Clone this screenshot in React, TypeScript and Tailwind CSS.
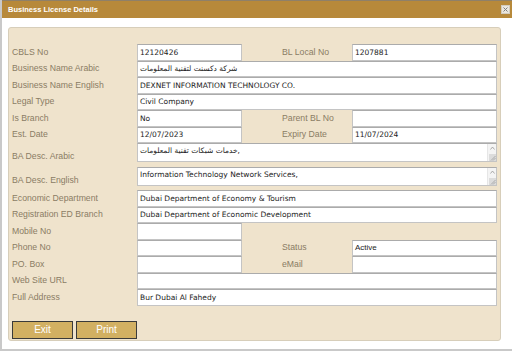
import React from "react"

const labelCls = "font-['Liberation_Sans',Arial,sans-serif] text-[8.7px] text-[#8a7c64] whitespace-nowrap"
const boxCls =
  "h-full border border-[#c4c4c4] border-t-[#ababab] bg-white flex items-center pl-[2px] font-['DejaVu_Sans',sans-serif] text-[7.5px] text-[#1c1c1c] whitespace-nowrap overflow-hidden"

function Field({ value = "", className = "" }: { value?: string; className?: string }) {
  return <div className={`${boxCls} ${className}`}>{value}</div>
}

function Row({ children }: { children: React.ReactNode }) {
  return <div className="grid grid-cols-[128px_105px_110px_145px] h-[16.5px]">{children}</div>
}

function Label({ text, right = false }: { text: string; right?: boolean }) {
  return (
    <div className={`flex items-center ${right ? "pl-[40px]" : "pl-[3px]"} ${labelCls}`}>{text}</div>
  )
}

function TextAreaRow({ label, value }: { label: string; value: string }) {
  return (
    <div className="grid grid-cols-[128px_360px] h-[23.5px]">
      <div className={`flex items-end pb-[3px] pl-[3px] ${labelCls}`}>{label}</div>
      <div className="h-[19px] flex border border-[#c4c4c4] border-t-[#ababab] bg-white">
        <div className="flex-1 pl-[2px] pt-[1px] font-['DejaVu_Sans',sans-serif] text-[7.5px] text-[#1c1c1c] whitespace-nowrap overflow-hidden">
          {value}
        </div>
        <div className="w-[9px] flex flex-col items-center justify-between bg-[#f4f4f4] border-l border-[#e6e6e6]">
          <svg width="5" height="4" viewBox="0 0 5 4" className="mt-[2px]">
            <path d="M0.5 3.5 L2.5 1 L4.5 3.5" fill="none" stroke="#9a9a9a" strokeWidth="0.8" />
          </svg>
          <svg width="7" height="7" viewBox="0 0 7 7" className="self-end">
            <rect width="7" height="7" fill="#dcdcdc" />
            <path d="M2 6.5 L6.5 2 M4 6.5 L6.5 4" stroke="#8c8c8c" strokeWidth="0.6" />
          </svg>
        </div>
      </div>
    </div>
  )
}

export default function App() {
  return (
    <div className="w-[512px] h-[352px] bg-white overflow-hidden">
      <div className="h-[351px] border-l-2 border-b-2 border-[#c9c9c9] flex flex-col">
        <div className="h-[18px] bg-[#b7893a] border-t border-[#8f8068] flex items-center justify-between pl-[6px] pr-[2px]">
          <span className="font-['Liberation_Sans',Arial,sans-serif] font-bold text-[7.5px] text-white">
            Business License Details
          </span>
          <span className="w-[9px] h-[9px] bg-[#ebe7de] border border-[#d2cbbd] flex items-center justify-center">
            <svg width="5" height="5" viewBox="0 0 5 5">
              <path d="M0.5 0.5 L4.5 4.5 M4.5 0.5 L0.5 4.5" stroke="#7d7d7d" strokeWidth="1" />
            </svg>
          </span>
        </div>

        <div className="ml-[6px] mt-[9px] w-[493px] h-[314px] bg-[#efe3cc] border border-[#d7ceba] rounded-[3px] pt-[16px] flex flex-col">
          <Row>
            <Label text="CBLS No" />
            <Field value="12120426" />
            <Label text="BL Local No" right />
            <Field value="1207881" />
          </Row>
          <Row>
            <Label text="Business Name Arabic" />
            <Field value="شركة دكسنت لتقنية المعلومات" className="col-span-3" />
          </Row>
          <Row>
            <Label text="Business Name English" />
            <Field value="DEXNET INFORMATION TECHNOLOGY CO." className="col-span-3" />
          </Row>
          <Row>
            <Label text="Legal Type" />
            <Field value="Civil Company" className="col-span-3" />
          </Row>
          <Row>
            <Label text="Is Branch" />
            <Field value="No" />
            <Label text="Parent BL No" right />
            <Field />
          </Row>
          <Row>
            <Label text="Est. Date" />
            <Field value="12/07/2023" />
            <Label text="Expiry Date" right />
            <Field value="11/07/2024" />
          </Row>
          <TextAreaRow label="BA Desc. Arabic" value="خدمات شبكات تقنية المعلومات," />
          <TextAreaRow label="BA Desc. English" value="Information Technology Network Services," />
          <Row>
            <Label text="Economic Department" />
            <Field value="Dubai Department of Economy & Tourism" className="col-span-3" />
          </Row>
          <Row>
            <Label text="Registration ED Branch" />
            <Field value="Dubai Department of Economic Development" className="col-span-3" />
          </Row>
          <Row>
            <Label text="Mobile No" />
            <Field />
          </Row>
          <Row>
            <Label text="Phone No" />
            <Field />
            <Label text="Status" right />
            <Field value="Active" className="font-['Liberation_Sans',Arial,sans-serif] text-[8px]" />
          </Row>
          <Row>
            <Label text="PO. Box" />
            <Field />
            <Label text="eMail" right />
            <Field />
          </Row>
          <Row>
            <Label text="Web Site URL" />
            <Field className="col-span-3" />
          </Row>
          <Row>
            <Label text="Full Address" />
            <Field value="Bur Dubai Al Fahedy" className="col-span-3" />
          </Row>

          <div className="flex gap-[3px] pl-[3px] mt-[15px]">
            {["Exit", "Print"].map((b) => (
              <button
                key={b}
                className="w-[61px] h-[18px] bg-[#d2b062] border border-[#3a3a3a] text-white font-['Liberation_Sans',Arial,sans-serif] text-[10px]"
              >
                {b}
              </button>
            ))}
          </div>
        </div>
      </div>
    </div>
  )
}
